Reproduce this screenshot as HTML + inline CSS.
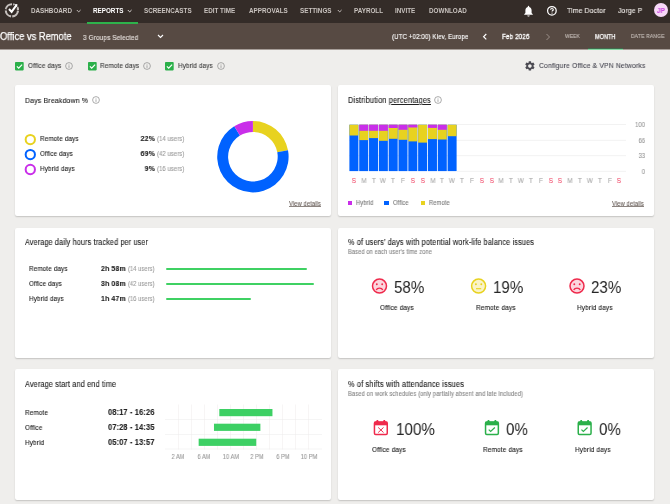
<!DOCTYPE html>
<html><head><meta charset="utf-8">
<style>
*{margin:0;padding:0;box-sizing:border-box}
html,body{width:670px;height:504px;overflow:hidden;background:#efeeec;font-family:"Liberation Sans",sans-serif;color:#222}
.t{position:absolute;white-space:nowrap;line-height:1;will-change:transform;-webkit-text-stroke:0.12px currentColor}
.b{font-weight:bold}
#nav{position:absolute;left:0;top:0;width:670px;height:23px;background:#342c28}
#sub{position:absolute;left:0;top:23px;width:670px;height:26px;background:#574a43}
.nv{color:#c9c3bf;font-size:6.3px;font-weight:bold;top:8.2px;-webkit-text-stroke:0}
.card{position:absolute;background:#fff;border-radius:2px;box-shadow:0 1px 1.5px rgba(0,0,0,0.18)}
svg{position:absolute;overflow:visible}
.u{text-decoration:underline;text-decoration-thickness:0.6px;text-underline-offset:0.6px}
.fm{-webkit-text-stroke:0.15px currentColor}
</style></head><body>
<div id="nav"></div>
<div id="sub"></div>
<div style="position:absolute;left:0;top:49px;width:670px;height:1px;background:#a69d98"></div>
<!-- green underlines -->
<div style="position:absolute;left:87px;top:21.7px;width:51px;height:2.2px;background:#2db24b"></div>
<div style="position:absolute;left:588px;top:48px;width:35px;height:1px;background:#3f6a4c"></div><div style="position:absolute;left:588px;top:49px;width:35px;height:1px;background:#86d9a4"></div>

<!-- logo -->
<svg style="left:0;top:0" width="30" height="23" viewBox="0 0 30 23">
  <circle cx="11.9" cy="10.3" r="6.1" fill="none" stroke="#c4bfbc" stroke-width="2.1" stroke-dasharray="8.38 1.2" stroke-dashoffset="-0.6"/>
  <path d="M9 9 L11.6 11.8 L16.6 4.8" fill="none" stroke="#342c28" stroke-width="3.8" stroke-linecap="square"/>
  <path d="M9 9 L11.6 11.8 L16.6 4.8" fill="none" stroke="#fff" stroke-width="2"/>
  <path d="M14.2 4.6 L17.4 4 L16.9 7.2 Z" fill="#fff"/>
</svg>

<div class="t nv" style="left:30.5px">DASHBOARD</div>
<svg style="left:75.7px;top:9px" width="6" height="5"><path d="M0.8 1 L2.7 2.9 L4.6 1" fill="none" stroke="#c4bebb" stroke-width="1"/></svg>
<div class="t nv" style="left:92.5px;color:#fff">REPORTS</div>
<svg style="left:126.8px;top:9px" width="6" height="5"><path d="M0.8 1 L2.7 2.9 L4.6 1" fill="none" stroke="#dcd8d6" stroke-width="1"/></svg>
<div class="t nv" style="left:143.8px">SCREENCASTS</div>
<div class="t nv" style="left:203.8px">EDIT TIME</div>
<div class="t nv" style="left:248.7px">APPROVALS</div>
<div class="t nv" style="left:300px">SETTINGS</div>
<svg style="left:336.8px;top:9px" width="6" height="5"><path d="M0.8 1 L2.7 2.9 L4.6 1" fill="none" stroke="#c4bebb" stroke-width="1"/></svg>
<div class="t nv" style="left:354.2px">PAYROLL</div>
<div class="t nv" style="left:395.4px">INVITE</div>
<div class="t nv" style="left:428.8px">DOWNLOAD</div>

<!-- bell -->
<svg style="left:522.7px;top:4.6px" width="11" height="12" viewBox="0 0 11 12">
  <path d="M5.5 0.8 C5.9 0.8 6.2 1.1 6.2 1.5 L6.2 2 C7.8 2.4 8.6 3.7 8.6 5.3 L8.6 8 L9.8 9.3 L9.8 9.8 L1.2 9.8 L1.2 9.3 L2.4 8 L2.4 5.3 C2.4 3.7 3.2 2.4 4.8 2 L4.8 1.5 C4.8 1.1 5.1 0.8 5.5 0.8 Z M4.3 10.4 L6.7 10.4 C6.7 11.1 6.2 11.5 5.5 11.5 C4.8 11.5 4.3 11.1 4.3 10.4Z" fill="#fff"/>
</svg>
<!-- help -->
<svg style="left:546px;top:5px" width="12" height="12" viewBox="0 0 12 12">
  <circle cx="5.9" cy="5.85" r="4.3" fill="none" stroke="#fff" stroke-width="1.25"/>
  <path d="M4.6 4.8 C4.6 4.0 5.2 3.5 5.95 3.5 C6.7 3.5 7.3 4.0 7.3 4.7 C7.3 5.5 6.05 5.6 6.05 6.6" fill="none" stroke="#fff" stroke-width="1.15"/>
  <circle cx="6.05" cy="8.05" r="0.62" fill="#fff"/>
</svg>
<div class="t fm" style="left:567px;top:6.75px;font-size:7.87px;color:#e8e4e1;letter-spacing:0.199px;transform:scaleX(0.8636);transform-origin:0 0">Time Doctor</div>
<div class="t fm" style="left:617.5px;top:6.75px;font-size:7.80px;color:#e8e4e1;letter-spacing:0.197px;transform:scaleX(0.8636);transform-origin:0 0">Jorge P</div>
<div style="position:absolute;left:653.5px;top:2.5px;width:14.8px;height:14.8px;border-radius:50%;background:#f8d8f8"></div>
<div class="t b" style="left:656.6px;top:6.87px;font-size:7.26px;color:#cc4ee0;letter-spacing:0.183px;transform:scaleX(0.8636);transform-origin:0 0">JP</div>

<!-- subheader -->
<div class="t" style="left:0.3px;top:32.1px;font-size:10px;color:#fff;-webkit-text-stroke:0.25px #fff;transform:scaleX(0.935);transform-origin:0 0">Office vs Remote</div>
<div class="t fm" style="left:82.5px;top:33.97px;font-size:7.37px;color:#e4dedb;letter-spacing:0.186px;transform:scaleX(0.8636);transform-origin:0 0">3 Groups Selected</div>
<svg style="left:156.8px;top:34px" width="7" height="5"><path d="M1 1 L3.5 3.5 L6 1" fill="none" stroke="#fff" stroke-width="1.1"/></svg>
<div class="t fm" style="left:391.5px;top:33.28px;font-size:7.00px;color:#fff;letter-spacing:0.177px;transform:scaleX(0.8636);transform-origin:0 0">(UTC +02:00) Kiev, Europe</div>
<svg style="left:481.5px;top:32.8px" width="6" height="8"><path d="M4.3 1 L1.6 3.7 L4.3 6.4" fill="none" stroke="#fff" stroke-width="1.2"/></svg>
<div class="t fm" style="left:502.3px;top:32.88px;font-size:7.21px;color:#fff;-webkit-text-stroke:0.3px #fff;letter-spacing:0.182px;transform:scaleX(0.8636);transform-origin:0 0">Feb 2026</div>
<svg style="left:545.2px;top:32.8px" width="6" height="8"><path d="M1.5 1 L4.5 4 L1.5 7" fill="none" stroke="#9b8f89" stroke-width="1"/></svg>
<div class="t fm" style="left:565px;top:33.85px;font-size:5.61px;color:#c2bab5;letter-spacing:0.142px;transform:scaleX(0.8636);transform-origin:0 0">WEEK</div>
<div class="t fm" style="left:594.8px;top:33.82px;font-size:6.27px;color:#fff;-webkit-text-stroke:0.25px #fff;letter-spacing:0.158px;transform:scaleX(0.8636);transform-origin:0 0">MONTH</div>
<div class="t fm" style="left:630.7px;top:33.84px;font-size:5.83px;color:#c2bab5;letter-spacing:0.147px;transform:scaleX(0.8636);transform-origin:0 0">DATE RANGE</div>

<!-- filters -->
<svg style="left:15px;top:61.5px" width="9" height="9"><rect width="8.7" height="8.4" rx="0.8" fill="#2bb04a"/><path d="M1.9 4.4 L3.7 6.1 L7.1 2.6" fill="none" stroke="#fff" stroke-width="1.2"/></svg>
<div class="t fm" style="left:27.7px;top:62.27px;font-size:7.37px;color:#444;letter-spacing:0.186px;transform:scaleX(0.8636);transform-origin:0 0">Office days</div>
<svg style="left:65px;top:62px" width="8" height="8"><circle cx="4" cy="4" r="3.4" fill="none" stroke="#888" stroke-width="0.7"/><rect x="3.65" y="3.3" width="0.7" height="2.6" fill="#888"/><circle cx="4" cy="2.4" r="0.4" fill="#888"/></svg>
<svg style="left:88px;top:61.5px" width="9" height="9"><rect width="8.7" height="8.4" rx="0.8" fill="#2bb04a"/><path d="M1.9 4.4 L3.7 6.1 L7.1 2.6" fill="none" stroke="#fff" stroke-width="1.2"/></svg>
<div class="t fm" style="left:100px;top:62.27px;font-size:7.37px;color:#444;letter-spacing:0.186px;transform:scaleX(0.8636);transform-origin:0 0">Remote days</div>
<svg style="left:143px;top:62px" width="8" height="8"><circle cx="4" cy="4" r="3.4" fill="none" stroke="#888" stroke-width="0.7"/><rect x="3.65" y="3.3" width="0.7" height="2.6" fill="#888"/><circle cx="4" cy="2.4" r="0.4" fill="#888"/></svg>
<svg style="left:165px;top:61.5px" width="9" height="9"><rect width="8.7" height="8.4" rx="0.8" fill="#2bb04a"/><path d="M1.9 4.4 L3.7 6.1 L7.1 2.6" fill="none" stroke="#fff" stroke-width="1.2"/></svg>
<div class="t fm" style="left:177.5px;top:62.27px;font-size:7.26px;color:#444;letter-spacing:0.183px;transform:scaleX(0.8636);transform-origin:0 0">Hybrid days</div>
<svg style="left:216.5px;top:62px" width="8" height="8"><circle cx="4" cy="4" r="3.4" fill="none" stroke="#888" stroke-width="0.7"/><rect x="3.65" y="3.3" width="0.7" height="2.6" fill="#888"/><circle cx="4" cy="2.4" r="0.4" fill="#888"/></svg>

<svg style="left:523.6px;top:59.9px" width="11.8" height="11.8" viewBox="0 0 24 24"><path fill="#4b4a52" d="M19.14 12.94c.04-.3.06-.61.06-.94 0-.32-.02-.64-.07-.94l2.03-1.58a.49.49 0 0 0 .12-.61l-1.92-3.32a.488.488 0 0 0-.59-.22l-2.39.96c-.5-.38-1.03-.7-1.62-.94l-.36-2.54a.484.484 0 0 0-.48-.41h-3.84c-.24 0-.43.17-.47.41l-.36 2.54c-.59.24-1.13.57-1.62.94l-2.39-.96c-.22-.08-.47 0-.59.22L2.74 8.87c-.12.21-.08.47.12.61l2.03 1.58c-.05.3-.09.63-.09.94s.02.64.07.94l-2.03 1.58a.49.49 0 0 0-.12.61l1.92 3.32c.12.22.37.29.59.22l2.39-.96c.5.38 1.03.7 1.62.94l.36 2.54c.05.24.24.41.48.41h3.84c.24 0 .44-.17.47-.41l.36-2.54c.59-.24 1.13-.56 1.62-.94l2.39.96c.22.08.47 0 .59-.22l1.92-3.32c.12-.22.07-.47-.12-.61l-2.01-1.58zM12 15.6c-1.98 0-3.6-1.62-3.6-3.6s1.62-3.6 3.6-3.6 3.6 1.62 3.6 3.6-1.62 3.6-3.6 3.6z"/></svg>
<div class="t fm" style="left:539px;top:62.25px;font-size:7.85px;color:#50505a;letter-spacing:0.198px;transform:scaleX(0.8636);transform-origin:0 0">Configure Office &amp; VPN Networks</div>

<!-- cards -->
<div class="card" style="left:15px;top:85px;width:316px;height:131px"></div>
<div class="card" style="left:338px;top:85px;width:316px;height:131px"></div>
<div class="card" style="left:15px;top:228px;width:316px;height:130px"></div>
<div class="card" style="left:338px;top:228px;width:316px;height:130px"></div>
<div class="card" style="left:15px;top:369px;width:316px;height:131px"></div>
<div class="card" style="left:338px;top:369px;width:316px;height:131px"></div>

<!-- card1 -->
<div class="t" style="left:25px;top:96.74px;font-size:8.03px;color:#222;letter-spacing:0.203px;transform:scaleX(0.8636);transform-origin:0 0">Days Breakdown %</div>
<svg style="left:92.1px;top:96.1px" width="8" height="8"><circle cx="4" cy="4" r="3.4" fill="none" stroke="#888" stroke-width="0.7"/><rect x="3.65" y="3.3" width="0.7" height="2.6" fill="#888"/><circle cx="4" cy="2.4" r="0.4" fill="#888"/></svg>

<svg style="left:24px;top:133px" width="13" height="44">
  <circle cx="6.3" cy="6.6" r="4.65" fill="none" stroke="#e8d21f" stroke-width="2"/>
  <circle cx="6.3" cy="21.6" r="4.65" fill="none" stroke="#0062ff" stroke-width="2"/>
  <circle cx="6.3" cy="36.5" r="4.65" fill="none" stroke="#c92ee9" stroke-width="2"/>
</svg>
<div class="t" style="left:39.7px;top:135.17px;font-size:7.26px;letter-spacing:0.183px;transform:scaleX(0.8636);transform-origin:0 0">Remote days</div>
<div class="t" style="left:39.7px;top:150.17px;font-size:7.26px;letter-spacing:0.183px;transform:scaleX(0.8636);transform-origin:0 0">Office days</div>
<div class="t" style="left:39.7px;top:165.17px;font-size:7.26px;letter-spacing:0.183px;transform:scaleX(0.8636);transform-origin:0 0">Hybrid days</div>
<div class="t b" style="left:126px;width:29px;text-align:right;top:135.44px;font-size:8.03px;letter-spacing:0.203px;transform:scaleX(0.8636);transform-origin:100% 0">22%</div>
<div class="t b" style="left:126px;width:29px;text-align:right;top:150.44px;font-size:8.03px;letter-spacing:0.203px;transform:scaleX(0.8636);transform-origin:100% 0">69%</div>
<div class="t b" style="left:126px;width:29px;text-align:right;top:165.44px;font-size:8.03px;letter-spacing:0.203px;transform:scaleX(0.8636);transform-origin:100% 0">9%</div>
<div class="t" style="left:157px;top:136.10px;font-size:6.66px;color:#9a9a9a;letter-spacing:0.168px;transform:scaleX(0.8636);transform-origin:0 0">(14 users)</div>
<div class="t" style="left:157px;top:151.10px;font-size:6.66px;color:#9a9a9a;letter-spacing:0.168px;transform:scaleX(0.8636);transform-origin:0 0">(42 users)</div>
<div class="t" style="left:157px;top:166.10px;font-size:6.66px;color:#9a9a9a;letter-spacing:0.168px;transform:scaleX(0.8636);transform-origin:0 0">(16 users)</div>

<svg style="left:0;top:0" width="670" height="504">
<path d="M252.90 121.00 A35.7 35.7 0 0 1 288.00 150.19 L277.28 152.18 A24.8 24.8 0 0 0 252.90 131.90 Z" fill="#e8d21f"/>
<path d="M288.00 150.19 A35.7 35.7 0 1 1 234.25 126.26 L239.94 135.55 A24.8 24.8 0 1 0 277.28 152.18 Z" fill="#0062ff"/>
<path d="M234.25 126.26 A35.7 35.7 0 0 1 252.90 121.00 L252.90 131.90 A24.8 24.8 0 0 0 239.94 135.55 Z" fill="#c92ee9"/>
</svg>
<div class="t" style="left:288.9px;top:200.50px;font-size:6.60px;color:#6a605b;letter-spacing:0.167px;transform:scaleX(0.8636);transform-origin:0 0">View details</div><div style="position:absolute;left:289px;top:205.7px;width:32px;height:0.7px;background:#8c8480"></div>

<!-- card2 -->
<div class="t" style="left:347.7px;top:96.12px;font-size:8.43px;letter-spacing:0.213px;transform:scaleX(0.8636);transform-origin:0 0">Distribution <span class="u">percentages</span></div>
<svg style="left:434.3px;top:95.6px" width="8" height="8"><circle cx="4" cy="4" r="3.4" fill="none" stroke="#888" stroke-width="0.7"/><rect x="3.65" y="3.3" width="0.7" height="2.6" fill="#888"/><circle cx="4" cy="2.4" r="0.4" fill="#888"/></svg>

<svg style="left:0;top:0" width="670" height="504">
<rect x="457" y="124.10" width="169" height="0.6" fill="#e9e9e9"/>
<rect x="349" y="139.90" width="277" height="0.6" fill="#e9e9e9"/>
<rect x="349" y="155.50" width="277" height="0.6" fill="#e9e9e9"/>
<rect x="457" y="170.90" width="169" height="0.6" fill="#e9e9e9"/>
<rect x="349.40" y="124.7" width="9.0" height="46.40" fill="#0062ff"/>
<rect x="349.40" y="124.7" width="9.0" height="10.80" fill="#e8d21f"/>
<rect x="359.22" y="124.7" width="9.0" height="46.40" fill="#0062ff"/>
<rect x="359.22" y="124.7" width="9.0" height="15.40" fill="#e8d21f"/>
<rect x="359.22" y="124.7" width="9.0" height="6.10" fill="#c92ee9"/>
<rect x="369.04" y="124.7" width="9.0" height="46.40" fill="#0062ff"/>
<rect x="369.04" y="124.7" width="9.0" height="13.40" fill="#e8d21f"/>
<rect x="369.04" y="124.7" width="9.0" height="6.10" fill="#c92ee9"/>
<rect x="378.86" y="124.7" width="9.0" height="46.40" fill="#0062ff"/>
<rect x="378.86" y="124.7" width="9.0" height="16.10" fill="#e8d21f"/>
<rect x="378.86" y="124.7" width="9.0" height="6.10" fill="#c92ee9"/>
<rect x="388.68" y="124.7" width="9.0" height="46.40" fill="#0062ff"/>
<rect x="388.68" y="124.7" width="9.0" height="14.10" fill="#e8d21f"/>
<rect x="388.68" y="124.7" width="9.0" height="3.30" fill="#c92ee9"/>
<rect x="398.50" y="124.7" width="9.0" height="46.40" fill="#0062ff"/>
<rect x="398.50" y="124.7" width="9.0" height="15.10" fill="#e8d21f"/>
<rect x="398.50" y="124.7" width="9.0" height="5.10" fill="#c92ee9"/>
<rect x="408.32" y="124.7" width="9.0" height="46.40" fill="#0062ff"/>
<rect x="408.32" y="124.7" width="9.0" height="16.70" fill="#e8d21f"/>
<rect x="408.32" y="124.7" width="9.0" height="2.80" fill="#c92ee9"/>
<rect x="418.14" y="124.7" width="9.0" height="46.40" fill="#0062ff"/>
<rect x="418.14" y="124.7" width="9.0" height="17.90" fill="#e8d21f"/>
<rect x="427.96" y="124.7" width="9.0" height="46.40" fill="#0062ff"/>
<rect x="427.96" y="124.7" width="9.0" height="14.40" fill="#e8d21f"/>
<rect x="427.96" y="124.7" width="9.0" height="3.20" fill="#c92ee9"/>
<rect x="437.78" y="124.7" width="9.0" height="46.40" fill="#0062ff"/>
<rect x="437.78" y="124.7" width="9.0" height="14.80" fill="#e8d21f"/>
<rect x="437.78" y="124.7" width="9.0" height="5.10" fill="#c92ee9"/>
<rect x="447.60" y="124.7" width="9.0" height="46.40" fill="#0062ff"/>
<rect x="447.60" y="124.7" width="9.0" height="11.50" fill="#e8d21f"/>
</svg>
<div class="t" style="left:605px;width:40.3px;text-align:right;top:121.89px;font-size:6.82px;color:#999;letter-spacing:0.172px;transform:scaleX(0.8636);transform-origin:100% 0">100</div>
<div class="t" style="left:605px;width:40.3px;text-align:right;top:137.69px;font-size:6.82px;color:#999;letter-spacing:0.172px;transform:scaleX(0.8636);transform-origin:100% 0">66</div>
<div class="t" style="left:605px;width:40.3px;text-align:right;top:153.29px;font-size:6.82px;color:#999;letter-spacing:0.172px;transform:scaleX(0.8636);transform-origin:100% 0">33</div>
<div class="t" style="left:605px;width:40.3px;text-align:right;top:168.69px;font-size:6.82px;color:#999;letter-spacing:0.172px;transform:scaleX(0.8636);transform-origin:100% 0">0</div>
<div class="t" style="left:349.00px;width:10px;text-align:center;top:177.48px;font-size:7.04px;color:#f0506e;letter-spacing:0.178px;transform:scaleX(0.8636);transform-origin:50% 0">S</div>
<div class="t" style="left:358.83px;width:10px;text-align:center;top:177.48px;font-size:7.04px;color:#aaaaaa;letter-spacing:0.178px;transform:scaleX(0.8636);transform-origin:50% 0">M</div>
<div class="t" style="left:368.66px;width:10px;text-align:center;top:177.48px;font-size:7.04px;color:#aaaaaa;letter-spacing:0.178px;transform:scaleX(0.8636);transform-origin:50% 0">T</div>
<div class="t" style="left:378.49px;width:10px;text-align:center;top:177.48px;font-size:7.04px;color:#aaaaaa;letter-spacing:0.178px;transform:scaleX(0.8636);transform-origin:50% 0">W</div>
<div class="t" style="left:388.32px;width:10px;text-align:center;top:177.48px;font-size:7.04px;color:#aaaaaa;letter-spacing:0.178px;transform:scaleX(0.8636);transform-origin:50% 0">T</div>
<div class="t" style="left:398.15px;width:10px;text-align:center;top:177.48px;font-size:7.04px;color:#aaaaaa;letter-spacing:0.178px;transform:scaleX(0.8636);transform-origin:50% 0">F</div>
<div class="t" style="left:407.98px;width:10px;text-align:center;top:177.48px;font-size:7.04px;color:#f0506e;letter-spacing:0.178px;transform:scaleX(0.8636);transform-origin:50% 0">S</div>
<div class="t" style="left:417.81px;width:10px;text-align:center;top:177.48px;font-size:7.04px;color:#f0506e;letter-spacing:0.178px;transform:scaleX(0.8636);transform-origin:50% 0">S</div>
<div class="t" style="left:427.64px;width:10px;text-align:center;top:177.48px;font-size:7.04px;color:#aaaaaa;letter-spacing:0.178px;transform:scaleX(0.8636);transform-origin:50% 0">M</div>
<div class="t" style="left:437.47px;width:10px;text-align:center;top:177.48px;font-size:7.04px;color:#aaaaaa;letter-spacing:0.178px;transform:scaleX(0.8636);transform-origin:50% 0">T</div>
<div class="t" style="left:447.30px;width:10px;text-align:center;top:177.48px;font-size:7.04px;color:#aaaaaa;letter-spacing:0.178px;transform:scaleX(0.8636);transform-origin:50% 0">W</div>
<div class="t" style="left:457.13px;width:10px;text-align:center;top:177.48px;font-size:7.04px;color:#aaaaaa;letter-spacing:0.178px;transform:scaleX(0.8636);transform-origin:50% 0">T</div>
<div class="t" style="left:466.96px;width:10px;text-align:center;top:177.48px;font-size:7.04px;color:#aaaaaa;letter-spacing:0.178px;transform:scaleX(0.8636);transform-origin:50% 0">F</div>
<div class="t" style="left:476.79px;width:10px;text-align:center;top:177.48px;font-size:7.04px;color:#f0506e;letter-spacing:0.178px;transform:scaleX(0.8636);transform-origin:50% 0">S</div>
<div class="t" style="left:486.62px;width:10px;text-align:center;top:177.48px;font-size:7.04px;color:#f0506e;letter-spacing:0.178px;transform:scaleX(0.8636);transform-origin:50% 0">S</div>
<div class="t" style="left:496.45px;width:10px;text-align:center;top:177.48px;font-size:7.04px;color:#aaaaaa;letter-spacing:0.178px;transform:scaleX(0.8636);transform-origin:50% 0">M</div>
<div class="t" style="left:506.28px;width:10px;text-align:center;top:177.48px;font-size:7.04px;color:#aaaaaa;letter-spacing:0.178px;transform:scaleX(0.8636);transform-origin:50% 0">T</div>
<div class="t" style="left:516.11px;width:10px;text-align:center;top:177.48px;font-size:7.04px;color:#aaaaaa;letter-spacing:0.178px;transform:scaleX(0.8636);transform-origin:50% 0">W</div>
<div class="t" style="left:525.94px;width:10px;text-align:center;top:177.48px;font-size:7.04px;color:#aaaaaa;letter-spacing:0.178px;transform:scaleX(0.8636);transform-origin:50% 0">T</div>
<div class="t" style="left:535.77px;width:10px;text-align:center;top:177.48px;font-size:7.04px;color:#aaaaaa;letter-spacing:0.178px;transform:scaleX(0.8636);transform-origin:50% 0">F</div>
<div class="t" style="left:545.60px;width:10px;text-align:center;top:177.48px;font-size:7.04px;color:#f0506e;letter-spacing:0.178px;transform:scaleX(0.8636);transform-origin:50% 0">S</div>
<div class="t" style="left:555.43px;width:10px;text-align:center;top:177.48px;font-size:7.04px;color:#f0506e;letter-spacing:0.178px;transform:scaleX(0.8636);transform-origin:50% 0">S</div>
<div class="t" style="left:565.26px;width:10px;text-align:center;top:177.48px;font-size:7.04px;color:#aaaaaa;letter-spacing:0.178px;transform:scaleX(0.8636);transform-origin:50% 0">M</div>
<div class="t" style="left:575.09px;width:10px;text-align:center;top:177.48px;font-size:7.04px;color:#aaaaaa;letter-spacing:0.178px;transform:scaleX(0.8636);transform-origin:50% 0">T</div>
<div class="t" style="left:584.92px;width:10px;text-align:center;top:177.48px;font-size:7.04px;color:#aaaaaa;letter-spacing:0.178px;transform:scaleX(0.8636);transform-origin:50% 0">W</div>
<div class="t" style="left:594.75px;width:10px;text-align:center;top:177.48px;font-size:7.04px;color:#aaaaaa;letter-spacing:0.178px;transform:scaleX(0.8636);transform-origin:50% 0">T</div>
<div class="t" style="left:604.58px;width:10px;text-align:center;top:177.48px;font-size:7.04px;color:#aaaaaa;letter-spacing:0.178px;transform:scaleX(0.8636);transform-origin:50% 0">F</div>
<div class="t" style="left:614.41px;width:10px;text-align:center;top:177.48px;font-size:7.04px;color:#f0506e;letter-spacing:0.178px;transform:scaleX(0.8636);transform-origin:50% 0">S</div>
<div style="position:absolute;left:347.5px;top:200.6px;width:4.6px;height:4.6px;background:#c92ee9"></div>
<div class="t" style="left:355.8px;top:200.10px;font-size:6.60px;color:#7a7a7a;letter-spacing:0.167px;transform:scaleX(0.8636);transform-origin:0 0">Hybrid</div>
<div style="position:absolute;left:384.4px;top:200.6px;width:4.6px;height:4.6px;background:#0062ff"></div>
<div class="t" style="left:392.8px;top:200.10px;font-size:6.60px;color:#7a7a7a;letter-spacing:0.167px;transform:scaleX(0.8636);transform-origin:0 0">Office</div>
<div style="position:absolute;left:420.6px;top:200.6px;width:4.6px;height:4.6px;background:#e8d21f"></div>
<div class="t" style="left:429px;top:200.10px;font-size:6.60px;color:#7a7a7a;letter-spacing:0.167px;transform:scaleX(0.8636);transform-origin:0 0">Remote</div>
<div class="t" style="left:612px;top:200.50px;font-size:6.60px;color:#6a605b;letter-spacing:0.167px;transform:scaleX(0.8636);transform-origin:0 0">View details</div><div style="position:absolute;left:612px;top:205.7px;width:32.3px;height:0.7px;background:#8c8480"></div>

<!-- card3 -->
<div class="t" style="left:24.6px;top:238.63px;font-size:8.28px;letter-spacing:0.209px;transform:scaleX(0.8636);transform-origin:0 0">Average daily hours tracked per user</div>
<div class="t" style="left:28.6px;top:264.67px;font-size:7.25px;letter-spacing:0.183px;transform:scaleX(0.8636);transform-origin:0 0">Remote days</div>
<div class="t" style="left:28.6px;top:279.67px;font-size:7.25px;letter-spacing:0.183px;transform:scaleX(0.8636);transform-origin:0 0">Office days</div>
<div class="t" style="left:28.6px;top:294.67px;font-size:7.25px;letter-spacing:0.183px;transform:scaleX(0.8636);transform-origin:0 0">Hybrid days</div>
<div class="t b" style="left:101px;top:265.04px;font-size:7.98px;letter-spacing:0.201px;transform:scaleX(0.8636);transform-origin:0 0">2h 58m</div>
<div class="t b" style="left:101px;top:280.04px;font-size:7.98px;letter-spacing:0.201px;transform:scaleX(0.8636);transform-origin:0 0">3h 08m</div>
<div class="t b" style="left:101px;top:295.04px;font-size:7.98px;letter-spacing:0.201px;transform:scaleX(0.8636);transform-origin:0 0">1h 47m</div>
<div class="t" style="left:128.4px;top:266.31px;font-size:6.49px;color:#9a9a9a;letter-spacing:0.164px;transform:scaleX(0.8636);transform-origin:0 0">(14 users)</div>
<div class="t" style="left:128.4px;top:281.31px;font-size:6.49px;color:#9a9a9a;letter-spacing:0.164px;transform:scaleX(0.8636);transform-origin:0 0">(42 users)</div>
<div class="t" style="left:128.4px;top:296.31px;font-size:6.49px;color:#9a9a9a;letter-spacing:0.164px;transform:scaleX(0.8636);transform-origin:0 0">(16 users)</div>
<div style="position:absolute;left:165.5px;top:268.4px;width:141px;height:2px;border-radius:1px;background:#3fd163"></div>
<div style="position:absolute;left:165.5px;top:283.1px;width:148.5px;height:2px;border-radius:1px;background:#3fd163"></div>
<div style="position:absolute;left:165.5px;top:298.1px;width:85px;height:2px;border-radius:1px;background:#3fd163"></div>

<!-- card4 -->
<div class="t" style="left:347.6px;top:238.32px;font-size:8.40px;letter-spacing:0.212px;transform:scaleX(0.8636);transform-origin:0 0">% of users’ days with potential work-life balance issues</div>
<div class="t" style="left:347.6px;top:248.91px;font-size:6.50px;color:#858585;letter-spacing:0.164px;transform:scaleX(0.8636);transform-origin:0 0">Based on each user's time zone</div>

<svg style="left:0;top:0" width="670" height="504">
<circle cx="379.5" cy="286.1" r="7.0" fill="#fcd6de" stroke="#ef2a4c" stroke-width="1.5"/><circle cx="376.8" cy="284.3" r="0.95" fill="#ef2a4c"/><circle cx="382.2" cy="284.3" r="0.95" fill="#ef2a4c"/><path d="M376.2 290.1 C377.3 287.5 381.7 287.5 382.8 290.1" fill="none" stroke="#ef2a4c" stroke-width="1.3"/>
<circle cx="478.6" cy="286.1" r="7.0" fill="#faf3c8" stroke="#e8d21f" stroke-width="1.5"/><circle cx="475.90000000000003" cy="284.3" r="0.95" fill="#e8d21f"/><circle cx="481.3" cy="284.3" r="0.95" fill="#e8d21f"/><path d="M476.0 288.70000000000005 L481.20000000000005 288.70000000000005" fill="none" stroke="#e8d21f" stroke-width="1.1"/>
<circle cx="577.0" cy="286.1" r="7.0" fill="#fcd6de" stroke="#ef2a4c" stroke-width="1.5"/><circle cx="574.3" cy="284.3" r="0.95" fill="#ef2a4c"/><circle cx="579.7" cy="284.3" r="0.95" fill="#ef2a4c"/><path d="M573.7 290.1 C574.8 287.5 579.2 287.5 580.3 290.1" fill="none" stroke="#ef2a4c" stroke-width="1.3"/>
</svg>
<div class="t" style="left:394.10px;top:278.6px;font-size:17.3px;transform:scaleX(0.875);transform-origin:0 0;color:#262626;-webkit-text-stroke:0">58%</div>
<div class="t" style="left:492.50px;top:278.6px;font-size:17.3px;transform:scaleX(0.875);transform-origin:0 0;color:#262626;-webkit-text-stroke:0">19%</div>
<div class="t" style="left:591.10px;top:278.6px;font-size:17.3px;transform:scaleX(0.875);transform-origin:0 0;color:#262626;-webkit-text-stroke:0">23%</div>
<div class="t" style="left:380px;top:304.26px;font-size:7.44px;color:#222;letter-spacing:0.188px;transform:scaleX(0.8636);transform-origin:0 0">Office days</div>
<div class="t" style="left:476.1px;top:304.26px;font-size:7.44px;color:#222;letter-spacing:0.188px;transform:scaleX(0.8636);transform-origin:0 0">Remote days</div>
<div class="t" style="left:576.9px;top:304.26px;font-size:7.44px;color:#222;letter-spacing:0.188px;transform:scaleX(0.8636);transform-origin:0 0">Hybrid days</div>
<!-- card5 -->
<div class="t" style="left:24.6px;top:379.82px;font-size:8.37px;letter-spacing:0.211px;transform:scaleX(0.8636);transform-origin:0 0">Average start and end time</div>
<div class="t" style="left:24.6px;top:409.17px;font-size:7.35px;letter-spacing:0.186px;transform:scaleX(0.8636);transform-origin:0 0">Remote</div>
<div class="t" style="left:24.6px;top:423.97px;font-size:7.35px;letter-spacing:0.186px;transform:scaleX(0.8636);transform-origin:0 0">Office</div>
<div class="t" style="left:24.6px;top:438.97px;font-size:7.35px;letter-spacing:0.186px;transform:scaleX(0.8636);transform-origin:0 0">Hybrid</div>
<div class="t b" style="left:107.6px;top:408.12px;font-size:8.50px;letter-spacing:0.215px;transform:scaleX(0.8636);transform-origin:0 0">08:17 - 16:26</div>
<div class="t b" style="left:107.6px;top:422.92px;font-size:8.50px;letter-spacing:0.215px;transform:scaleX(0.8636);transform-origin:0 0">07:28 - 14:35</div>
<div class="t b" style="left:107.6px;top:437.92px;font-size:8.50px;letter-spacing:0.215px;transform:scaleX(0.8636);transform-origin:0 0">05:07 - 13:57</div>

<svg style="left:0;top:0" width="670" height="504">
<rect x="178.09" y="404.5" width="0.5" height="45" fill="#efeaea"/>
<rect x="191.13" y="404.5" width="0.5" height="45" fill="#efeaea"/>
<rect x="204.17" y="404.5" width="0.5" height="45" fill="#efeaea"/>
<rect x="217.21" y="404.5" width="0.5" height="45" fill="#efeaea"/>
<rect x="230.25" y="404.5" width="0.5" height="45" fill="#efeaea"/>
<rect x="243.29" y="404.5" width="0.5" height="45" fill="#efeaea"/>
<rect x="256.33" y="404.5" width="0.5" height="45" fill="#efeaea"/>
<rect x="269.37" y="404.5" width="0.5" height="45" fill="#efeaea"/>
<rect x="282.41" y="404.5" width="0.5" height="45" fill="#efeaea"/>
<rect x="295.45" y="404.5" width="0.5" height="45" fill="#efeaea"/>
<rect x="308.49" y="404.5" width="0.5" height="45" fill="#efeaea"/>
<rect x="165" y="419.35" width="157" height="0.5" fill="#ebebeb"/>
<rect x="165" y="434.05" width="157" height="0.5" fill="#ebebeb"/>
<rect x="165" y="448.75" width="157" height="0.5" fill="#ebebeb"/>
<rect x="219.31" y="409" width="53.14" height="7.2" fill="#3dd064"/>
<rect x="213.98" y="423.7" width="46.40" height="7.2" fill="#3dd064"/>
<rect x="198.66" y="438.7" width="57.59" height="7.2" fill="#3dd064"/>
</svg>
<div class="t" style="left:163.34px;width:30px;text-align:center;top:454.31px;font-size:6.38px;color:#999;letter-spacing:0.161px;transform:scaleX(0.8636);transform-origin:50% 0">2 AM</div>
<div class="t" style="left:189.42px;width:30px;text-align:center;top:454.31px;font-size:6.38px;color:#999;letter-spacing:0.161px;transform:scaleX(0.8636);transform-origin:50% 0">6 AM</div>
<div class="t" style="left:215.50px;width:30px;text-align:center;top:454.31px;font-size:6.38px;color:#999;letter-spacing:0.161px;transform:scaleX(0.8636);transform-origin:50% 0">10 AM</div>
<div class="t" style="left:241.58px;width:30px;text-align:center;top:454.31px;font-size:6.38px;color:#999;letter-spacing:0.161px;transform:scaleX(0.8636);transform-origin:50% 0">2 PM</div>
<div class="t" style="left:267.66px;width:30px;text-align:center;top:454.31px;font-size:6.38px;color:#999;letter-spacing:0.161px;transform:scaleX(0.8636);transform-origin:50% 0">6 PM</div>
<div class="t" style="left:293.74px;width:30px;text-align:center;top:454.31px;font-size:6.38px;color:#999;letter-spacing:0.161px;transform:scaleX(0.8636);transform-origin:50% 0">10 PM</div>
<!-- card6 -->
<div class="t" style="left:347.6px;top:379.72px;font-size:8.47px;letter-spacing:0.214px;transform:scaleX(0.8636);transform-origin:0 0">% of shifts with attendance issues</div>
<div class="t" style="left:347.6px;top:390.70px;font-size:6.61px;color:#858585;letter-spacing:0.167px;transform:scaleX(0.8636);transform-origin:0 0">Based on work schedules (only partially absent and late included)</div>

<svg style="left:0;top:0" width="670" height="504">
<rect x="374.45" y="422.09999999999997" width="12.8" height="12.350000000000001" rx="1.2" fill="none" stroke="#ef2a4c" stroke-width="1.5"/><rect x="374.45" y="421.7" width="12.8" height="3.6" fill="#ef2a4c"/><path d="M376.09999999999997 422.09999999999997 L376.7 419.9 L378.09999999999997 419.9 L378.7 422.09999999999997 Z M383.0 422.09999999999997 L383.6 419.9 L385.0 419.9 L385.6 422.09999999999997 Z" fill="#ef2a4c"/><path d="M378.45 427.7 L383.24999999999994 432.29999999999995 M383.24999999999994 427.7 L378.45 432.29999999999995" stroke="#ef2a4c" stroke-width="1.0" stroke-linecap="round"/>
<rect x="485.55" y="422.09999999999997" width="12.8" height="12.350000000000001" rx="1.2" fill="none" stroke="#2bb04a" stroke-width="1.5"/><rect x="485.55" y="421.7" width="12.8" height="3.6" fill="#2bb04a"/><path d="M487.2 422.09999999999997 L487.8 419.9 L489.2 419.9 L489.8 422.09999999999997 Z M494.1 422.09999999999997 L494.70000000000005 419.9 L496.1 419.9 L496.70000000000005 422.09999999999997 Z" fill="#2bb04a"/><path d="M488.75 429.59999999999997 L490.65 431.5 L494.84999999999997 427.5" fill="none" stroke="#2bb04a" stroke-width="1.2"/>
<rect x="578.25" y="422.09999999999997" width="12.8" height="12.350000000000001" rx="1.2" fill="none" stroke="#2bb04a" stroke-width="1.5"/><rect x="578.25" y="421.7" width="12.8" height="3.6" fill="#2bb04a"/><path d="M579.9 422.09999999999997 L580.5 419.9 L581.9 419.9 L582.5 422.09999999999997 Z M586.8 422.09999999999997 L587.4 419.9 L588.8 419.9 L589.4 422.09999999999997 Z" fill="#2bb04a"/><path d="M581.4499999999999 429.59999999999997 L583.35 431.5 L587.55 427.5" fill="none" stroke="#2bb04a" stroke-width="1.2"/>
</svg>
<div class="t" style="left:395.50px;top:420.5px;font-size:17.3px;transform:scaleX(0.88);transform-origin:0 0;color:#262626;-webkit-text-stroke:0">100%</div>
<div class="t" style="left:505.90px;top:420.5px;font-size:17.3px;transform:scaleX(0.88);transform-origin:0 0;color:#262626;-webkit-text-stroke:0">0%</div>
<div class="t" style="left:599.20px;top:420.5px;font-size:17.3px;transform:scaleX(0.88);transform-origin:0 0;color:#262626;-webkit-text-stroke:0">0%</div>
<div class="t" style="left:371.6px;top:446.36px;font-size:7.44px;color:#222;letter-spacing:0.188px;transform:scaleX(0.8636);transform-origin:0 0">Office days</div>
<div class="t" style="left:482.6px;top:446.36px;font-size:7.44px;color:#222;letter-spacing:0.188px;transform:scaleX(0.8636);transform-origin:0 0">Remote days</div>
<div class="t" style="left:575.3px;top:446.36px;font-size:7.44px;color:#222;letter-spacing:0.188px;transform:scaleX(0.8636);transform-origin:0 0">Hybrid days</div>
</body></html>
